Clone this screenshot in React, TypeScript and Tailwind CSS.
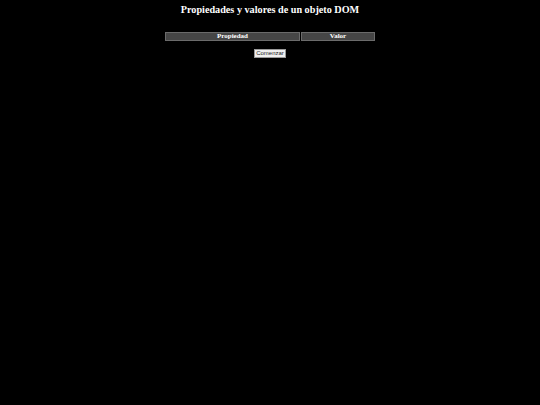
export default function App() {
  return (
    <div className="min-h-[405px] w-full bg-black font-['Liberation_Serif',serif] text-white">
      <h1 className="pt-[4px] text-center text-[10.2px] font-bold leading-[11px]">
        Propiedades y valores de un objeto DOM
      </h1>
      <div className="mt-[17px] flex justify-center">
        <table className="w-[210px] border-separate border-spacing-0">
          <thead>
            <tr>
              <th className="h-[9px] w-[135px] border border-[#6b6b6b] bg-[#464646] p-0 text-[7px] leading-[7px] font-bold">
                Propiedad
              </th>
              <th className="w-[1px] p-0" />
              <th className="h-[9px] border border-[#6b6b6b] bg-[#464646] p-0 text-[7px] leading-[7px] font-bold">
                Valor
              </th>
            </tr>
          </thead>
        </table>
      </div>
      <div className="mt-[8px] flex justify-center">
        <button className="h-[9px] w-[32px] border border-[#9a9a9a] bg-[#f0f0f0] p-0 font-['Liberation_Sans',sans-serif] text-[6px] leading-[7px] text-[#222]">
          Comenzar
        </button>
      </div>
    </div>
  );
}
